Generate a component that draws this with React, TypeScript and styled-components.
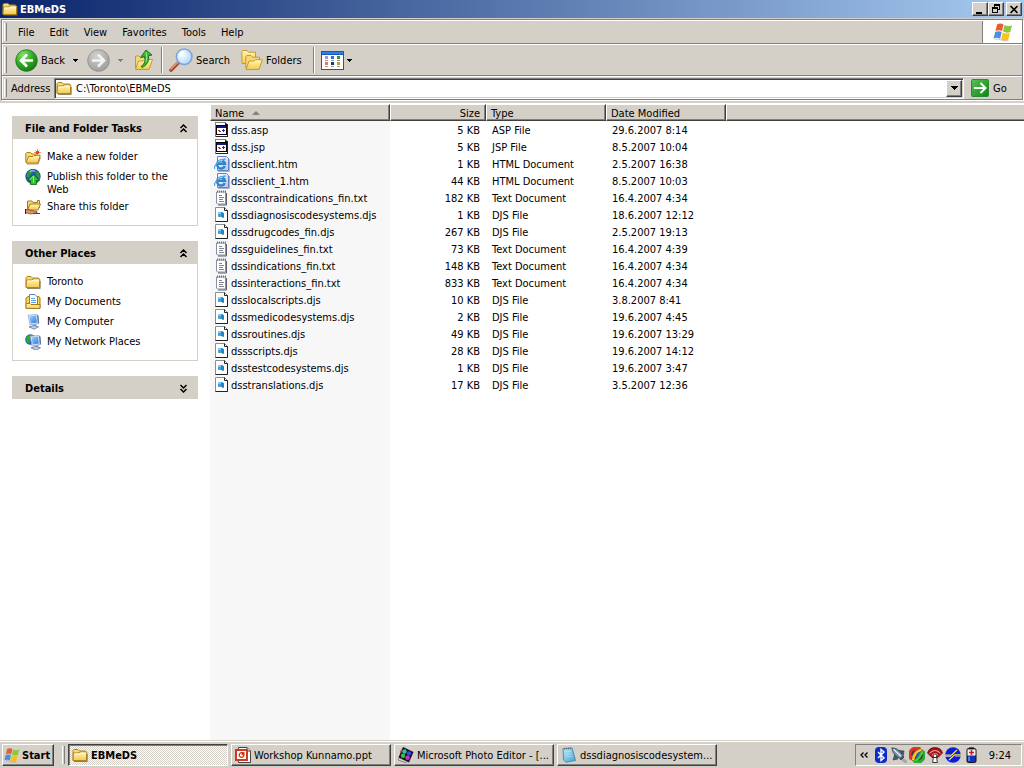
import React from 'react';
import styled, { createGlobalStyle, css } from 'styled-components';

const face = '#d4d0c8';
const shadow = '#808080';
const dark = '#404040';
const uiFont = `"DejaVu Sans Condensed", "DejaVu Sans", "Noto Sans", sans-serif`;

const GlobalStyle = createGlobalStyle`
  *, *::before, *::after { box-sizing: border-box; }
  html, body { margin: 0; padding: 0; }
  body, button, input { font-family: ${uiFont}; font-size: 11px; line-height: 13px; color: #000; }
  button { margin: 0; padding: 0; border: 0; background: none; white-space: nowrap; }
  ul { list-style: none; margin: 0; padding: 0; }
  svg { display: block; flex: none; }
`;

const raised = css`
  background: ${face};
  border: 1px solid;
  border-color: #fff ${dark} ${dark} #fff;
  box-shadow: inset -1px -1px 0 ${shadow};
`;

const Screen = styled.div`
  display: flex;
  flex-direction: column;
  min-height: 100vh;
  background: #fff;
`;

const Defs = styled.svg`
  position: absolute;
  width: 0;
  height: 0;
`;

/* Title bar */
const TitleBar = styled.header`
  display: flex;
  align-items: center;
  height: 18px;
  padding: 0 2px;
  gap: 2px;
  color: #fff;
  background: linear-gradient(to right, #0a246a, #a6caf0);
`;
const Title = styled.h1`
  flex: 1;
  margin: 0;
  font-size: 11px;
  line-height: 13px;
`;
const WindowControls = styled.div`
  display: flex;
`;
const WindowButton = styled.button<{ $apart?: boolean }>`
  ${raised}
  display: flex;
  align-items: center;
  justify-content: center;
  width: 16px;
  height: 14px;
  margin-left: ${p => (p.$apart ? 2 : 0)}px;
`;

/* Bars under the title */
const Rebar = styled.div`
  padding: 1px 1px 3px;
  background: ${face};
  border-bottom: 1px solid #fff;
`;
const BandFrame = styled.div`
  border: 1px solid ${shadow};
  box-shadow: 1px 1px 0 #fff, inset 1px 0 0 #fff;
`;
const Band = styled.div<{ $height: number }>`
  display: flex;
  align-items: stretch;
  height: ${p => p.$height}px;
  padding-left: 2px;
  border-top: 1px solid #fff;
  & + & { box-shadow: 0 -1px 0 ${shadow}; margin-top: 1px; }
`;
const Gripper = styled.span`
  flex: none;
  width: 3px;
  margin: 2px 0;
  border-left: 1px solid #fff;
  border-right: 1px solid ${shadow};
`;
const MenuBar = styled.nav`
  display: flex;
  flex: 1;
  padding-left: 3px;
`;
const MenuItem = styled.button`
  padding: 0 7px 0 8px;
`;
const Brand = styled.div`
  display: flex;
  align-items: center;
  justify-content: center;
  width: 40px;
  background: #fff;
  border-left: 1px solid ${shadow};
`;
const ToolBar = styled.div`
  display: flex;
  align-items: center;
  flex: 1;
  padding-left: 8px;
`;
const ToolButton = styled.button<{ $width?: number }>`
  display: flex;
  align-items: center;
  gap: 3px;
  height: 26px;
  width: ${p => (p.$width ? p.$width + 'px' : 'auto')};
`;
const Separator = styled.span`
  width: 2px;
  height: 26px;
  margin: 0 6px;
  border-left: 1px solid ${shadow};
  border-right: 1px solid #fff;
`;
const AddressBar = styled.form`
  display: flex;
  align-items: center;
  flex: 1;
`;
const AddressLabel = styled.label`
  width: 47px;
  padding-left: 4px;
`;
const Combo = styled.div`
  display: flex;
  align-items: center;
  flex: 1;
  height: 21px;
  padding-left: 1px;
  background: #fff;
  border: 1px solid;
  border-color: ${shadow} #fff #fff ${shadow};
  box-shadow: inset 1px 1px 0 ${dark}, inset -1px -1px 0 ${face};
`;
const AddressInput = styled.input`
  flex: 1;
  min-width: 0;
  padding: 0 4px;
  border: 0;
  outline: 0;
  background: transparent;
`;
const DropButton = styled.button`
  ${raised}
  display: flex;
  align-items: center;
  justify-content: center;
  width: 16px;
  height: 17px;
  margin-right: 1px;
`;
const GoButton = styled.button`
  display: flex;
  align-items: center;
  gap: 4px;
  width: 58px;
  padding-left: 7px;
`;

/* Explorer body */
const Body = styled.main`
  display: flex;
  flex: 1;
`;
const Sidebar = styled.aside`
  display: flex;
  flex-direction: column;
  gap: 15px;
  flex: none;
  width: 210px;
  padding: 12px 12px 0;
`;
const Panel = styled.section`
  background: #fff;
`;
const PanelTitle = styled.h2`
  margin: 0;
  font-size: 11px;
`;
const PanelToggle = styled.button`
  display: flex;
  align-items: center;
  justify-content: space-between;
  width: 100%;
  height: 23px;
  padding: 2px 10px 0 13px;
  font-weight: bold;
  background: ${face};
`;
const TaskList = styled.ul`
  display: flex;
  flex-direction: column;
  gap: 4px;
  padding: 9px 12px 11px;
  border: 1px solid ${face};
  border-top: 0;
`;
const TaskLink = styled.a`
  display: flex;
  gap: 6px;
  min-height: 16px;
  color: #000;
  text-decoration: none;
  svg { margin-top: 1px; margin-bottom: -1px; }
  span { padding-top: 2px; max-width: 126px; margin-bottom: -2px; }
`;
const FileArea = styled.div`
  flex: 1;
  min-width: 0;
  background: linear-gradient(#f7f7f7, #f7f7f7) no-repeat left top / 180px 100%;
`;
const FileTable = styled.table`
  width: 100%;
  table-layout: fixed;
  border-collapse: separate;
  border-spacing: 0;
`;
const Col = styled.col<{ $width?: number }>`
  width: ${p => (p.$width ? p.$width + 'px' : 'auto')};
`;
const HeadCell = styled.th<{ $right?: boolean }>`
  height: 17px;
  padding: 1px 5px 0 4px;
  font-weight: normal;
  text-align: ${p => (p.$right ? 'right' : 'left')};
  background: ${face};
  border: 1px solid;
  border-color: #fff ${dark} ${dark} #fff;
  box-shadow: inset -1px -1px 0 ${shadow};
  &:last-child { border-right: 0; box-shadow: inset 0 -1px 0 ${shadow}; }
`;
const SortMark = styled.span`
  display: inline-block;
  margin: 0 0 2px 8px;
  border: 4px solid transparent;
  border-top: 0;
  border-bottom-color: ${shadow};
`;
const Cell = styled.td<{ $right?: boolean }>`
  height: 17px;
  padding: 1px 6px 0;
  white-space: nowrap;
  text-align: ${p => (p.$right ? 'right' : 'left')};
`;
const FileName = styled.div`
  display: flex;
  align-items: center;
  gap: 1px;
  margin-left: -2px;
`;

/* Task bar */
const TaskBar = styled.footer`
  display: flex;
  align-items: center;
  height: 28px;
  padding: 2px 2px 0;
  background: ${face};
  box-shadow: inset 0 1px 0 ${face}, inset 0 2px 0 #fff;
`;
const StartButton = styled.button`
  ${raised}
  display: flex;
  align-items: center;
  gap: 2px;
  width: 52px;
  height: 22px;
  padding-left: 1px;
  font-weight: bold;
`;
const BarGrip = styled.span`
  width: 3px;
  height: 18px;
  margin: 0 3px 0 8px;
  border-left: 1px solid #fff;
  border-right: 1px solid ${shadow};
`;
const TaskButtons = styled.div`
  display: flex;
  flex: 1;
  gap: 3px;
  min-width: 0;
`;
const TaskButton = styled.button<{ $active?: boolean }>`
  ${raised}
  display: flex;
  align-items: center;
  gap: 3px;
  flex: 0 1 160px;
  min-width: 0;
  height: 22px;
  padding: 0 1px 0 3px;
  ${p =>
    p.$active &&
    css`
      font-weight: bold;
      border-color: ${dark} #fff #fff ${dark};
      box-shadow: inset 1px 1px 0 ${shadow};
      background: repeating-conic-gradient(#fff 0 25%, ${face} 0 50%) 0 0 / 2px 2px;
    `}
`;
const Tray = styled.div`
  display: flex;
  align-items: center;
  gap: 2px;
  height: 22px;
  padding: 0 10px 0 3px;
  border: 1px solid;
  border-color: ${shadow} #fff #fff ${shadow};
`;
const TrayButton = styled.button`
  display: flex;
`;
const Clock = styled.time`
  padding-left: 8px;
`;

/* Icons */
type IconProps = { size?: number };

const Gradients = () => (
  <Defs aria-hidden="true">
    <defs>
      <linearGradient id="folderFill" x1="0" y1="0" x2="0" y2="1">
        <stop offset="0" stopColor="#fff8b8" />
        <stop offset="1" stopColor="#f3c94f" />
      </linearGradient>
      <radialGradient id="greenBall" cx=".35" cy=".25" r=".8">
        <stop offset="0" stopColor="#8fe06c" />
        <stop offset=".5" stopColor="#37ad2c" />
        <stop offset="1" stopColor="#12780f" />
      </radialGradient>
      <radialGradient id="grayBall" cx=".4" cy=".3" r=".8">
        <stop offset="0" stopColor="#d2d2d0" />
        <stop offset="1" stopColor="#989896" />
      </radialGradient>
      <radialGradient id="lens" cx=".35" cy=".35" r=".75">
        <stop offset="0" stopColor="#fff" />
        <stop offset="1" stopColor="#a5d2fa" />
      </radialGradient>
      <linearGradient id="goFill" x1="0" y1="0" x2="1" y2="1">
        <stop offset="0" stopColor="#5cbf5a" />
        <stop offset="1" stopColor="#078a0b" />
      </linearGradient>
      <linearGradient id="screenFill" x1="0" y1="0" x2="1" y2="1">
        <stop offset="0" stopColor="#9fd6ff" />
        <stop offset="1" stopColor="#2478e0" />
      </linearGradient>
      <linearGradient id="padFill" x1="0" y1="0" x2="1" y2="1">
        <stop offset="0" stopColor="#b9ecfa" />
        <stop offset="1" stopColor="#3f9fd2" />
      </linearGradient>
      <linearGradient id="pageFill" x1="0" y1="0" x2="1" y2="1">
        <stop offset="0" stopColor="#ffffff" />
        <stop offset="1" stopColor="#b4c8ee" />
      </linearGradient>
    </defs>
  </Defs>
);

const FolderIcon = ({ size = 16 }: IconProps) => (
  <svg width={size} height={size} viewBox="0 0 16 16" aria-hidden="true">
    <path d="M1 13V3.5L2 2.5H6L7.5 4H13.5V6" fill="#f5d878" stroke="#b58416" />
    <path d="M1 13.5 1.5 6H7L8 5H14.8L14.5 13.5Z" fill="url(#folderFill)" stroke="#b58416" strokeLinejoin="round" />
    <path d="M2.4 7H7.4L8.4 6H13.8" stroke="#fffde4" fill="none" />
    <path d="M2 14.5H15.2V7" stroke="#6b5420" strokeOpacity=".7" fill="none" />
  </svg>
);
const OpenFolder = () => (
  <>
    <path d="M.8 13V4.5L1.8 3.5H5.5L7 5H12.5V7" fill="#f5d878" stroke="#b58416" />
    <path d="M1 14 3.5 7.5H8L9 6.5H15.3L12.8 14Z" fill="url(#folderFill)" stroke="#b58416" strokeLinejoin="round" />
    <path d="M2 15H13L15.5 8.5" fill="none" stroke="#6b5420" strokeOpacity=".6" />
  </>
);
const NewFolderIcon = () => (
  <svg width="16" height="16" viewBox="0 0 16 16" aria-hidden="true">
    <OpenFolder />
    <path d="M12.5 0V7M9 3.5H16M10.3 1.3 14.7 5.7M14.7 1.3 10.3 5.7" stroke="#f79a30" strokeWidth=".9" />
    <circle cx="12.5" cy="3.5" r="1.8" fill="#e8401c" />
  </svg>
);
const ShareFolderIcon = () => (
  <svg width="16" height="16" viewBox="0 0 16 16" aria-hidden="true">
    <path d="M2.5 11V2H7L8 3.5H12.5V1.5H14.5V9" fill="#f5d878" stroke="#a87c1a" />
    <path d="M2.5 11 5 5H15.5L13 11Z" fill="url(#folderFill)" stroke="#a87c1a" />
    <path d="M0 10.5H3L6 11.5 12 12.5V14L5 15 2 14H0Z" fill="#e0926b" stroke="#6b3a22" strokeWidth=".7" />
    <path d="M0 10V15" stroke="#222" strokeWidth="2" />
    <path d="M8 14.5H15" stroke="#444" />
  </svg>
);
const GlobeUpIcon = () => (
  <svg width="16" height="16" viewBox="0 0 16 16" aria-hidden="true">
    <circle cx="8" cy="7.5" r="7.3" fill="#1c5aa6" stroke="#123a78" strokeWidth=".6" />
    <path d="M2.5 3.5 6 1 8 3 5 6 4 9 1.2 7.5ZM10 1.5 13.5 3.5 15 7.5 14 10 11 6Z" fill="#2f9a3c" />
    <path d="M4.5 2.5Q7 1 10 2.2" stroke="#b9dcff" fill="none" />
    <path d="M8.5 5.5 14.5 11.5H11.5V15.5H5.5V11.5H2.5Z" fill="#35bf2c" stroke="#0c6b14" strokeWidth=".8" />
    <path d="M5 10.5 8.5 7V14" stroke="#8ff07c" fill="none" />
  </svg>
);
const DocumentsIcon = () => (
  <svg width="16" height="16" viewBox="0 0 16 16" aria-hidden="true">
    <path d="M1 14V4L3 2.5H14L15 4V14Z" fill="#f4cf62" stroke="#a87c1a" />
    <path d="M4.5 .5H10L12.5 3V12H4.5Z" fill="#fff" stroke="#5c87bd" />
    <path d="M6 4.5H10M6 6.5H11M6 8.5H11" stroke="#5aa4ea" />
    <path d="M1 9.5H5L6 10.5H15V14.5H1Z" fill="url(#folderFill)" stroke="#a87c1a" />
  </svg>
);
const Monitor = () => (
  <>
    <path d="M3.2 1.2 12 .6 13 9.5 5 11Z" fill="#e4edf8" stroke="#8fa6c6" strokeWidth=".8" />
    <path d="M4.3 2.3 11 1.8 11.8 8.6 5.8 9.6Z" fill="url(#screenFill)" />
    <path d="M12 .6 13.6 1.8 14.2 9.6 13 9.5Z" fill="#5b76a2" />
    <path d="M8 10.5 11.5 10V12.5H8Z" fill="#8fa6c6" />
    <path d="M4 12.8 9 11.5 13.5 12.8 9 15.2Z" fill="#c6d0e4" stroke="#64779e" strokeWidth=".8" />
  </>
);
const ComputerIcon = () => (
  <svg width="16" height="16" viewBox="0 0 16 16" aria-hidden="true">
    <Monitor />
  </svg>
);
const NetworkIcon = () => (
  <svg width="16" height="16" viewBox="0 0 16 16" aria-hidden="true">
    <circle cx="5.5" cy="5.5" r="5.3" fill="#2459b8" />
    <path d="M1 3 4 .5 7 1.5 5 5 4.5 10 1.5 8.5ZM7 1 10 3H7Z" fill="#2fa53b" />
    <g transform="translate(2 1)">
      <Monitor />
    </g>
  </svg>
);
const FlagIcon = ({ size = 16 }: IconProps) => (
  <svg width={size} height={size} viewBox="0 0 20 20" aria-hidden="true">
    <path d="M4 2.5Q7 .5 10.5 2.5L9 9Q6 7.5 2.5 9Z" fill="#f0592b" />
    <path d="M11.5 3Q15 5 19 3.2L17.3 10Q13.5 11.5 10 9.5Z" fill="#8cc63f" />
    <path d="M2.2 10Q5.5 8.5 8.7 10L7.2 16.7Q4 15 .5 16.7Z" fill="#4a8fe8" />
    <path d="M9.7 10.6Q13.3 12.3 17 11L15.3 17.7Q12 19.3 8.2 17.4Z" fill="#fbc21a" />
    <path d="M2 17.5Q5 16.2 7.5 17.8Q11 19.8 15.5 18.6" stroke="#777" strokeOpacity=".5" fill="none" strokeWidth=".8" />
  </svg>
);
const BackIcon = () => (
  <svg width="23" height="23" viewBox="0 0 23 23" aria-hidden="true">
    <circle cx="11.5" cy="11.5" r="10.8" fill="url(#greenBall)" stroke="#1e7a1b" strokeWidth=".8" />
    <path d="M18 11.5H6.5M12 5.5 6 11.5 12 17.5" fill="none" stroke="#fff" strokeWidth="2.6" />
  </svg>
);
const ForwardIcon = () => (
  <svg width="23" height="23" viewBox="0 0 23 23" aria-hidden="true">
    <circle cx="11.5" cy="11.5" r="10.8" fill="url(#grayBall)" stroke="#8a8a88" strokeWidth=".8" />
    <path d="M5 11.5H16.5M11 5.5 17 11.5 11 17.5" fill="none" stroke="#f4f4f2" strokeWidth="2.6" />
  </svg>
);
const UpFolderIcon = () => (
  <svg width="20" height="22" viewBox="0 0 20 22" aria-hidden="true">
    <path d="M1.5 19V7H5L6.5 8.5H13V12" fill="#f5d878" stroke="#c99a25" />
    <path d="M1.5 20.5 4.5 12H9.5L11 10.5H18.5L15 20.5Z" fill="url(#folderFill)" stroke="#c99a25" strokeLinejoin="round" />
    <path d="M7 17.5Q12.5 14 10.5 7.5L6.5 8.5 12 1 18 6 14.5 6.7Q16 14 8.5 18.5Z" fill="#3fb535" stroke="#17761a" strokeLinejoin="round" />
    <path d="M12 3.5Q14 9 11.8 13" fill="none" stroke="#a5ec8c" />
  </svg>
);
const SearchIcon = () => (
  <svg width="24" height="24" viewBox="0 0 24 24" aria-hidden="true">
    <path d="M9.5 14.5 2 22" stroke="#8a4a32" strokeWidth="3.6" strokeLinecap="round" />
    <path d="M9 14 1.8 21.2" stroke="#e88d63" strokeWidth="1.8" strokeLinecap="round" />
    <circle cx="15.2" cy="8.8" r="7.8" fill="url(#lens)" stroke="#7ba4dc" strokeWidth="1.5" />
    <path d="M10.5 8.5Q11 4.5 15 4" stroke="#fff" strokeWidth="1.6" fill="none" />
  </svg>
);
const FoldersIcon = () => (
  <svg width="22" height="22" viewBox="0 0 22 22" aria-hidden="true">
    <path d="M1 14.5 .8 2.5 2 1.5H6L7.5 3.2H14.5V14.5Z" fill="url(#folderFill)" stroke="#c99a25" strokeLinejoin="round" />
    <path d="M4.8 19V7.5L6 6.5H10L11.5 8.2H18.5V12" fill="#f5d878" stroke="#c99a25" strokeLinejoin="round" />
    <path d="M5 20.5 8 12H13L14.5 10.7H21.3L18 20.5Z" fill="url(#folderFill)" stroke="#c99a25" strokeLinejoin="round" />
  </svg>
);
const ViewsIcon = () => (
  <svg width="23" height="19" viewBox="0 0 23 19" shapeRendering="crispEdges" aria-hidden="true">
    <rect width="23" height="19" fill="#1c56b8" />
    <rect x="1" y="1" width="21" height="2" fill="#2f7fe4" />
    <rect x="1" y="4" width="21" height="14" fill="#fff" />
    <path d="M4 5H7V8H4Z" fill="#9a98cc" />
    <path d="M10 5H13V8H10Z" fill="#2b6fd6" />
    <path d="M16 5H19V8H16Z" fill="#2a9a34" />
    <path d="M4 11H7V14H4Z" fill="#f07848" />
    <path d="M10 11H13V14H10Z" fill="#16368a" />
    <path d="M16 11H19V14H16Z" fill="#d39a10" />
    <path d="M4 9.5H7M10 9.5H13M16 9.5H19M4 15.5H7M10 15.5H13M16 15.5H19" stroke="#9a9a9a" />
  </svg>
);
const ArrowDown = ({ color = '#000' }: { color?: string }) => (
  <svg width="5" height="3" viewBox="0 0 5 3" shapeRendering="crispEdges" aria-hidden="true">
    <path d="M0 0H5V1H4V2H3V3H2V2H1V1H0Z" fill={color} />
  </svg>
);
const ComboArrow = () => (
  <svg width="7" height="4" viewBox="0 0 7 4" shapeRendering="crispEdges" aria-hidden="true">
    <path d="M0 0H7V1H6V2H5V3H4V4H3V3H2V2H1V1H0Z" />
  </svg>
);
const GoIcon = () => (
  <svg width="18" height="18" viewBox="0 0 18 18" aria-hidden="true">
    <rect x=".5" y=".5" width="17" height="17" rx="1" fill="url(#goFill)" stroke="#2c8a30" />
    <path d="M3 9H14M9.5 4 14.5 9 9.5 14" fill="none" stroke="#fff" strokeWidth="2" />
  </svg>
);
const Chevrons = ({ down }: { down?: boolean }) => (
  <svg width="9" height="9" viewBox="0 0 9 9" aria-hidden="true">
    <path
      d={down ? 'M1.5 1 4.5 4 7.5 1M1.5 5 4.5 8 7.5 5' : 'M1.5 4 4.5 1 7.5 4M1.5 8 4.5 5 7.5 8'}
      fill="none"
      stroke="#000"
      strokeWidth="1.5"
    />
  </svg>
);

const ScriptPageIcon = () => (
  <svg width="16" height="16" viewBox="0 0 16 16" shapeRendering="crispEdges" aria-hidden="true">
    <path d="M1.5 .5H11.5L13.5 2.5V14.5H1.5Z" fill="#fff" stroke="#808080" />
    <path d="M11.5 .5V2.5H13.5V14.5H1.5" fill="none" stroke="#222" />
    <rect x="2" y="3" width="11" height="10" fill="#000" />
    <rect x="3" y="4" width="9" height="2" fill="#14148c" />
    <rect x="3" y="6" width="9" height="6" fill="#fff" />
    <path d="M4 8H6V9H7V10H5V9H4Z" fill="#c02828" />
    <path d="M8 8H9V7H10V8H11V9H10V10H9V9H8Z" fill="#2222c8" />
  </svg>
);
const HtmlIcon = () => (
  <svg width="16" height="16" viewBox="0 0 16 16" aria-hidden="true">
    <path d="M3.5 .5H12.5L14.5 2.5V14.5H3.5Z" fill="url(#pageFill)" stroke="#6482c0" />
    <path d="M15.5 3V15.5H4" fill="none" stroke="#8c98b4" strokeOpacity=".7" />
    <path d="M10.8 10A4 4 0 1 1 11 7.8H3.5" fill="none" stroke="#2c84cc" strokeWidth="2.4" />
    <path d="M.8 12.8C-.6 10.5 4 4 11.8 2.8" fill="none" stroke="#4fa6e4" strokeWidth="1.3" />
    <path d="M4 5.5Q6 3.8 8.5 4.6" fill="none" stroke="#a6dcfa" />
  </svg>
);
const TextIcon = () => (
  <svg width="16" height="16" viewBox="0 0 16 16" aria-hidden="true">
    <path d="M2.5 2H11.5V14H3.5L2.5 13Z" fill="#fff" stroke="#8690a4" />
    <path d="M12.5 3V15H4" fill="none" stroke="#5f5f68" />
    <path d="M3 1.5H12" stroke="#8e7428" strokeWidth="2" strokeDasharray="1 1" />
    <path d="M5 5.5H8M5 7.5H10M5 9.5H9M5 11.5H10" stroke="#858592" />
  </svg>
);
const DjsIcon = () => (
  <svg width="16" height="16" viewBox="0 0 16 16" aria-hidden="true">
    <path d="M1.5 .5H10.5L13.5 3.5V14.5H1.5Z" fill="#fff" stroke="#8c8c8c" />
    <path d="M10.5 .5V3.5H13.5V14.5H1.5" fill="none" stroke="#222" />
    <path d="M4 5H9V9H4Z" fill="#3f9fe0" />
    <path d="M4 5H7V7H4Z" fill="#7cc8f0" />
    <path d="M7 6H10V10H7Z" fill="#2f7fc8" />
    <path d="M4 9.5H7M8 10.5H10" stroke="#60a8a8" />
  </svg>
);
const PowerPointIcon = () => (
  <svg width="16" height="16" viewBox="0 0 16 16" aria-hidden="true">
    <path d="M3.5 .5H12L15.5 4V15.5H3.5Z" fill="#fff" stroke="#444" />
    <path d="M12 .5V4H15.5" fill="#ddd" stroke="#444" />
    <rect x="1" y="3" width="11" height="10" fill="#fff" stroke="#d3381c" strokeWidth="2" />
    <circle cx="6.5" cy="8" r="2.3" fill="none" stroke="#d3381c" strokeWidth="1.3" />
    <path d="M6.5 8V5H9.5V8Z" fill="#d3381c" />
  </svg>
);
const PhotoIcon = () => (
  <svg width="16" height="16" viewBox="0 0 16 16" aria-hidden="true">
    <path d="M5 0 15.5 5 11 15.5 .5 10.5Z" fill="#111" />
    <circle cx="6.5" cy="4.5" r="2.2" fill="#16c8d2" />
    <circle cx="11" cy="6.5" r="2.2" fill="#3848e8" />
    <circle cx="5" cy="8.8" r="2.2" fill="#28c83c" />
    <circle cx="9.5" cy="10.8" r="2.3" fill="#cf2cd0" />
    <path d="M1 11 0 13 9 16" stroke="#8a8a8a" fill="none" />
    <path d="M2.5 5.5 4 3" stroke="#d83030" strokeWidth="1.5" />
  </svg>
);
const NotepadIcon = () => (
  <svg width="16" height="16" viewBox="0 0 16 16" aria-hidden="true">
    <path d="M2 1.5 11 1 14.5 13.5 5 15.2 2.5 13Z" fill="url(#padFill)" stroke="#4b8db4" />
    <path d="M3 1.8 10.5 1.3" stroke="#5f6b72" strokeWidth="1.5" strokeDasharray="1 1" />
    <path d="M4.5 5 10 4.5M5 7.5 11 7M5.5 10 11.5 9.5" stroke="#fff" strokeOpacity=".35" />
  </svg>
);
const BluetoothIcon = () => (
  <svg width="16" height="16" viewBox="0 0 16 16" aria-hidden="true">
    <rect x="2" y="0" width="12" height="16" rx="4" fill="#0c2cc8" />
    <path d="M5 5 11 11 8 13.5V2.5L11 5 5 11" fill="none" stroke="#fff" strokeWidth="1.4" />
  </svg>
);
const RocketIcon = () => (
  <svg width="16" height="16" viewBox="0 0 16 16" aria-hidden="true">
    <path d="M10.5 11.5 15 15" stroke="#a8a8a4" strokeWidth="3" strokeLinecap="round" />
    <path d="M4 6.5 2 13 7 12ZM7.5 3.5 13 4 12.5 8Z" fill="#4a5a6a" stroke="#26323e" strokeWidth=".6" />
    <path d="M.8 .8Q6 1 9 4.5L13 10 10.5 12.5 5 9Q1.5 6 .8 .8Z" fill="#7890a6" stroke="#2c3844" strokeWidth=".8" />
    <path d="M2.5 2.2 10 9.2" stroke="#dfe9f2" strokeWidth="1.4" />
    <path d="M9 12.5 12.5 9" stroke="#2c4c78" strokeWidth="1.6" />
  </svg>
);
const SwirlIcon = () => (
  <svg width="16" height="16" viewBox="0 0 16 16" aria-hidden="true">
    <circle cx="8" cy="8" r="7.6" fill="#3a3a30" />
    <path d="M1.5 11A7 7 0 0 1 10 1.2Q6 4.5 5 9Z" fill="none" stroke="#e03424" strokeWidth="3.2" strokeLinejoin="round" />
    <path d="M14.5 5A7 7 0 0 1 6 14.8Q10 11.5 11 7Z" fill="none" stroke="#28a838" strokeWidth="3" strokeLinejoin="round" />
    <path d="M4 13.5Q4.5 5.5 12.5 2.6" fill="none" stroke="#f0cc28" strokeWidth="2.6" />
    <path d="M5.5 14Q11.5 11.5 13.5 4" fill="none" stroke="#52c850" strokeWidth="1.8" />
    <path d="M7 11Q7.5 7.5 10 6" fill="none" stroke="#2a5cc8" strokeWidth="1.6" />
  </svg>
);
const WirelessIcon = () => (
  <svg width="16" height="16" viewBox="0 0 16 16" aria-hidden="true">
    <path d="M.5 6Q2 .6 8 .6T15.5 6L11 10.5H5Z" fill="#a81014" stroke="#4c0608" strokeWidth=".7" />
    <path d="M2.5 6.5Q8 .5 13.5 6.5M4.8 8.5Q8 4.5 11.2 8.5" fill="none" stroke="#f0a8a0" strokeWidth="1.1" />
    <circle cx="8" cy="8.8" r="1.8" fill="#fff" stroke="#222" strokeWidth=".8" />
    <path d="M6.3 10.5H9.7L10.3 15.5H5.7Z" fill="#fff" stroke="#222" strokeWidth=".9" />
  </svg>
);
const LinkIcon = () => (
  <svg width="16" height="16" viewBox="0 0 16 16" aria-hidden="true">
    <circle cx="8" cy="8" r="7.8" fill="#0c1cd8" />
    <path d="M0 8.2H6.5L12 3M4 13 9.5 7.8H16" fill="none" stroke="#f2e040" strokeWidth="1.3" />
    <path d="M0 9.5H6M10 9.2H16" stroke="#c8ccd8" strokeWidth=".8" />
  </svg>
);
const BatteryIcon = () => (
  <svg width="16" height="16" viewBox="0 0 16 16" aria-hidden="true">
    <rect x="6" y="0" width="5" height="2" fill="#555" />
    <rect x="4" y="1.5" width="9" height="14" rx="1.5" fill="#1730c0" stroke="#111" />
    <rect x="4.5" y="2.5" width="8" height="6" fill="#f4f4f4" />
    <path d="M8.5 3V8M6 5.5H11" stroke="#d81818" strokeWidth="1.5" />
    <path d="M6 9.5V14" stroke="#8fc6f4" />
  </svg>
);
const MoreIcon = () => (
  <svg width="12" height="16" viewBox="0 0 12 16" aria-hidden="true">
    <path d="M4.5 5.5 2 8 4.5 10.5M8.5 5.5 6 8 8.5 10.5" fill="none" stroke="#000" strokeWidth="1.3" />
  </svg>
);

/* Data */
type Kind = 'script' | 'html' | 'text' | 'djs';
const kindIcons: Record<Kind, React.FC> = {
  script: ScriptPageIcon,
  html: HtmlIcon,
  text: TextIcon,
  djs: DjsIcon,
};
const files: [Kind, string, string, string, string][] = [
  ['script', 'dss.asp', '5 KB', 'ASP File', '29.6.2007 8:14'],
  ['script', 'dss.jsp', '5 KB', 'JSP File', '8.5.2007 10:04'],
  ['html', 'dssclient.htm', '1 KB', 'HTML Document', '2.5.2007 16:38'],
  ['html', 'dssclient_1.htm', '44 KB', 'HTML Document', '8.5.2007 10:03'],
  ['text', 'dsscontraindications_fin.txt', '182 KB', 'Text Document', '16.4.2007 4:34'],
  ['djs', 'dssdiagnosiscodesystems.djs', '1 KB', 'DJS File', '18.6.2007 12:12'],
  ['djs', 'dssdrugcodes_fin.djs', '267 KB', 'DJS File', '2.5.2007 19:13'],
  ['text', 'dssguidelines_fin.txt', '73 KB', 'Text Document', '16.4.2007 4:39'],
  ['text', 'dssindications_fin.txt', '148 KB', 'Text Document', '16.4.2007 4:34'],
  ['text', 'dssinteractions_fin.txt', '833 KB', 'Text Document', '16.4.2007 4:34'],
  ['djs', 'dsslocalscripts.djs', '10 KB', 'DJS File', '3.8.2007 8:41'],
  ['djs', 'dssmedicodesystems.djs', '2 KB', 'DJS File', '19.6.2007 4:45'],
  ['djs', 'dssroutines.djs', '49 KB', 'DJS File', '19.6.2007 13:29'],
  ['djs', 'dssscripts.djs', '28 KB', 'DJS File', '19.6.2007 14:12'],
  ['djs', 'dsstestcodesystems.djs', '1 KB', 'DJS File', '19.6.2007 3:47'],
  ['djs', 'dsstranslations.djs', '17 KB', 'DJS File', '3.5.2007 12:36'],
];
const panels: { title: string; items: [React.FC<IconProps>, string][] }[] = [
  {
    title: 'File and Folder Tasks',
    items: [
      [NewFolderIcon, 'Make a new folder'],
      [GlobeUpIcon, 'Publish this folder to the Web'],
      [ShareFolderIcon, 'Share this folder'],
    ],
  },
  {
    title: 'Other Places',
    items: [
      [FolderIcon, 'Toronto'],
      [DocumentsIcon, 'My Documents'],
      [ComputerIcon, 'My Computer'],
      [NetworkIcon, 'My Network Places'],
    ],
  },
  { title: 'Details', items: [] },
];
const trayItems: [React.FC, string][] = [
  [MoreIcon, 'Show hidden icons'],
  [BluetoothIcon, 'Bluetooth'],
  [RocketIcon, 'Launcher'],
  [SwirlIcon, 'Graphics settings'],
  [WirelessIcon, 'Wireless network'],
  [LinkIcon, 'Connection'],
  [BatteryIcon, 'Battery'],
];

export default function App() {
  return (
    <Screen>
      <GlobalStyle />
      <Gradients />
      <TitleBar>
        <FolderIcon />
        <Title>EBMeDS</Title>
        <WindowControls>
          <WindowButton aria-label="Minimize">
            <svg width="10" height="9" viewBox="0 0 10 9" shapeRendering="crispEdges">
              <rect x="1" y="7" width="6" height="2" />
            </svg>
          </WindowButton>
          <WindowButton aria-label="Restore">
            <svg width="10" height="10" viewBox="0 0 10 10" shapeRendering="crispEdges">
              <path d="M3 0H9V6H7V5H8V2H4V3H3ZM1 3H7V9H1ZM2 5V8H6V5Z" fillRule="evenodd" />
            </svg>
          </WindowButton>
          <WindowButton aria-label="Close" $apart>
            <svg width="10" height="9" viewBox="0 0 10 9">
              <path d="M1.5 1 8.5 8M8.5 1 1.5 8" stroke="#000" strokeWidth="1.7" />
            </svg>
          </WindowButton>
        </WindowControls>
      </TitleBar>

      <Rebar>
        <BandFrame>
          <Band $height={23}>
            <Gripper />
            <MenuBar aria-label="Menu">
              {['File', 'Edit', 'View', 'Favorites', 'Tools', 'Help'].map(name => (
                <MenuItem key={name}>{name}</MenuItem>
              ))}
            </MenuBar>
            <Brand>
              <FlagIcon size={20} />
            </Brand>
          </Band>
          <Band $height={31}>
            <Gripper />
            <ToolBar role="toolbar">
              <ToolButton $width={58}>
                <BackIcon />
                Back
              </ToolButton>
              <ToolButton aria-label="Back history" $width={14}>
                <ArrowDown />
              </ToolButton>
              <ToolButton aria-label="Forward" $width={31}>
                <ForwardIcon />
              </ToolButton>
              <ToolButton aria-label="Forward history" $width={16}>
                <ArrowDown color="#808080" />
              </ToolButton>
              <ToolButton aria-label="Up" $width={21}>
                <UpFolderIcon />
              </ToolButton>
              <Separator />
              <ToolButton $width={72}>
                <SearchIcon />
                Search
              </ToolButton>
              <ToolButton $width={66}>
                <FoldersIcon />
                Folders
              </ToolButton>
              <Separator />
              <ToolButton aria-label="Views">
                <ViewsIcon />
                <ArrowDown />
              </ToolButton>
            </ToolBar>
          </Band>
          <Band $height={23}>
            <Gripper />
            <AddressBar onSubmit={e => e.preventDefault()}>
              <AddressLabel htmlFor="address">Address</AddressLabel>
              <Combo>
                <FolderIcon />
                <AddressInput id="address" type="text" defaultValue="C:\Toronto\EBMeDS" />
                <DropButton type="button" aria-label="Show addresses">
                  <ComboArrow />
                </DropButton>
              </Combo>
              <GoButton type="submit">
                <GoIcon />
                Go
              </GoButton>
            </AddressBar>
          </Band>
        </BandFrame>
      </Rebar>

      <Body>
        <Sidebar>
          {panels.map(panel => (
            <Panel key={panel.title}>
              <PanelTitle>
                <PanelToggle aria-expanded={panel.items.length > 0}>
                  {panel.title}
                  <Chevrons down={panel.items.length === 0} />
                </PanelToggle>
              </PanelTitle>
              {panel.items.length > 0 && (
                <TaskList>
                  {panel.items.map(([Icon, label]) => (
                    <li key={label}>
                      <TaskLink href="#">
                        <Icon />
                        <span>{label}</span>
                      </TaskLink>
                    </li>
                  ))}
                </TaskList>
              )}
            </Panel>
          ))}
        </Sidebar>
        <FileArea>
          <FileTable>
            <colgroup>
              <Col $width={180} />
              <Col $width={96} />
              <Col $width={120} />
              <Col $width={120} />
              <Col />
            </colgroup>
            <thead>
              <tr>
                <HeadCell aria-sort="ascending">
                  Name
                  <SortMark />
                </HeadCell>
                <HeadCell $right>Size</HeadCell>
                <HeadCell>Type</HeadCell>
                <HeadCell>Date Modified</HeadCell>
                <HeadCell as="td" />
              </tr>
            </thead>
            <tbody>
              {files.map(([kind, name, size, type, date]) => {
                const Icon = kindIcons[kind];
                return (
                  <tr key={name}>
                    <Cell>
                      <FileName>
                        <Icon />
                        {name}
                      </FileName>
                    </Cell>
                    <Cell $right>{size}</Cell>
                    <Cell>{type}</Cell>
                    <Cell>{date}</Cell>
                    <Cell />
                  </tr>
                );
              })}
            </tbody>
          </FileTable>
        </FileArea>
      </Body>

      <TaskBar>
        <StartButton>
          <FlagIcon />
          Start
        </StartButton>
        <BarGrip />
        <TaskButtons>
          <TaskButton $active>
            <FolderIcon />
            <span>EBMeDS</span>
          </TaskButton>
          <TaskButton>
            <PowerPointIcon />
            <span>Workshop Kunnamo.ppt</span>
          </TaskButton>
          <TaskButton>
            <PhotoIcon />
            <span>Microsoft Photo Editor - [...</span>
          </TaskButton>
          <TaskButton>
            <NotepadIcon />
            <span>dssdiagnosiscodesystem...</span>
          </TaskButton>
        </TaskButtons>
        <Tray>
          {trayItems.map(([Icon, label]) => (
            <TrayButton key={label} aria-label={label}>
              <Icon />
            </TrayButton>
          ))}
          <Clock>9:24</Clock>
        </Tray>
      </TaskBar>
    </Screen>
  );
}
